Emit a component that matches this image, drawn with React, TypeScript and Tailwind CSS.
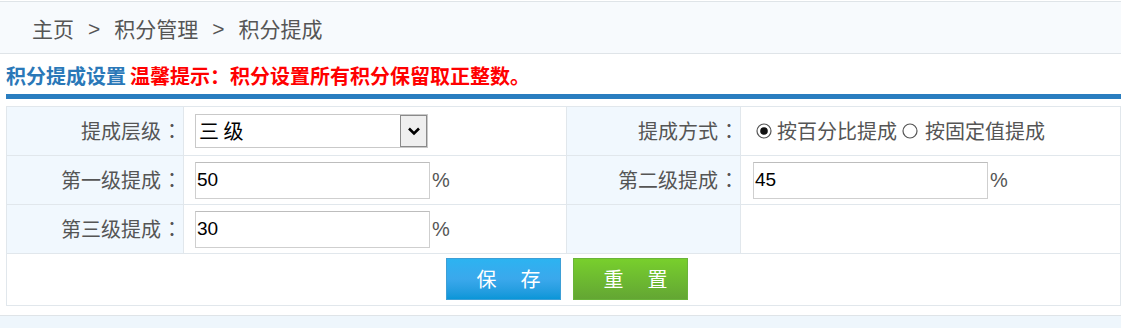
import React from "react";

const cjk = { fontFamily: '"Microsoft YaHei", "Noto Sans CJK SC", "Liberation Sans", sans-serif' };
const arial = { fontFamily: '"Liberation Sans", "Noto Sans CJK SC", sans-serif' };
const tc = { fontFamily: '"Noto Sans CJK TC", sans-serif' };

function Radio({ checked }: { checked?: boolean }) {
  return (
    <svg width="16" height="16" viewBox="0 0 16 16" className="shrink-0">
      <circle cx="8" cy="8" r="7" fill="#fff" stroke="#555" strokeWidth="1.2" />
      {checked && <circle cx="8" cy="8" r="3.8" fill="#111" />}
    </svg>
  );
}

function Label({ text }: { text: string }) {
  return (
    <div className="flex items-center justify-end pr-[1px] bg-[#f1f8fe] text-[20px] text-[#555] border-r border-[#e1e7ec]">
      <span>{text}</span>
      <span className="ml-[1px]" style={tc}>：</span>
    </div>
  );
}

function PctInput({ value }: { value: string }) {
  return (
    <div className="flex items-center">
      <div
        className="w-[235px] h-[37px] border border-[#cfcfcf] border-t-[#bdbdbd] bg-white flex items-center pl-[1px] text-[19px] text-black"
        style={arial}
      >
        {value}
      </div>
      <span className="ml-[2px] text-[20px] text-[#555]" style={arial}>%</span>
    </div>
  );
}

function Btn({ a, b, cls }: { a: string; b: string; cls: string }) {
  return (
    <button
      className={
        "w-[115px] h-[42px] border text-white text-[20px] pl-[11px] flex items-center justify-center whitespace-nowrap " +
        cls
      }
    >
      <span>{a}</span>
      <span className="ml-[24px]">{b}</span>
    </button>
  );
}

export default function App() {
  return (
    <div className="w-[1121px] h-[328px] bg-white overflow-hidden" style={cjk}>
      {/* breadcrumb */}
      <div className="h-[53px] mt-[1px] border-t border-b border-[#dfe4e8] bg-[#f7fafd] flex items-center pl-[32px] pt-[2px] text-[21px] text-[#555]">
        <span>主页</span>
        <span className="mx-[14px]" style={arial}>&gt;</span>
        <span>积分管理</span>
        <span className="mx-[14px]" style={arial}>&gt;</span>
        <span>积分提成</span>
      </div>

      {/* title */}
      <div className="ml-[6px] h-[40px] flex items-end pb-[3px] font-bold text-[20px]">
        <span className="text-[#2a78b8]">积分提成设置</span>
        <span className="ml-[4px] text-[#ff0000]">温馨提示：积分设置所有积分保留取正整数。</span>
      </div>
      <div className="ml-[6px] h-[5px] bg-[#2a7ec0]" />

      {/* form table */}
      <div className="ml-[6px] mt-[7px] border border-[#e1e7ec] bg-white">
        <div className="grid grid-cols-[177px_383px_174px_1fr] h-[49px] border-b border-[#e1e7ec]">
          <Label text="提成层级" />
          <div className="flex items-center pl-[11px] border-r border-[#e1e7ec]">
            <div className="w-[233px] h-[34px] border border-[#c9c9c9] bg-white flex items-center justify-between">
              <span className="pl-[3px] text-[20px] text-black">三 级</span>
              <div className="w-[27px] h-[32px] bg-[#efefef] border border-[#8a8a8a] flex items-center justify-center">
                <svg width="14" height="10" viewBox="0 0 14 10">
                  <path d="M2 2.5 L7 7.5 L12 2.5" fill="none" stroke="#000" strokeWidth="2.6" />
                </svg>
              </div>
            </div>
          </div>
          <Label text="提成方式" />
          <div className="flex items-center pl-[15px] text-[20px] text-[#555]">
            <Radio checked />
            <span className="ml-[5px]">按百分比提成</span>
            <span className="ml-[5px]"><Radio /></span>
            <span className="ml-[7px]">按固定值提成</span>
          </div>
        </div>

        <div className="grid grid-cols-[177px_383px_174px_1fr] h-[49px] border-b border-[#e1e7ec]">
          <Label text="第一级提成" />
          <div className="flex items-center pl-[11px] border-r border-[#e1e7ec]">
            <PctInput value="50" />
          </div>
          <Label text="第二级提成" />
          <div className="flex items-center pl-[12px]">
            <PctInput value="45" />
          </div>
        </div>

        <div className="grid grid-cols-[177px_383px_174px_1fr] h-[49px] border-b border-[#e1e7ec]">
          <Label text="第三级提成" />
          <div className="flex items-center pl-[11px] border-r border-[#e1e7ec]">
            <PctInput value="30" />
          </div>
          <div className="bg-[#f1f8fe] border-r border-[#e1e7ec]" />
          <div />
        </div>

        <div className="h-[51px] flex items-start justify-center pt-[4px] pl-[6px] gap-[12px]">
          <Btn a="保" b="存" cls="border-[#3d9fd6] bg-gradient-to-b from-[#2cb3f1] via-[#3aa8ec] to-[#0896d8]" />
          <Btn a="重" b="置" cls="border-[#6ab43a] bg-gradient-to-b from-[#78cf2c] to-[#63a633]" />
        </div>
      </div>

      {/* bottom band */}
      <div className="mt-[9px] h-[20px] border-t border-[#dfe4e8] bg-[#eef6fc]" />
    </div>
  );
}
